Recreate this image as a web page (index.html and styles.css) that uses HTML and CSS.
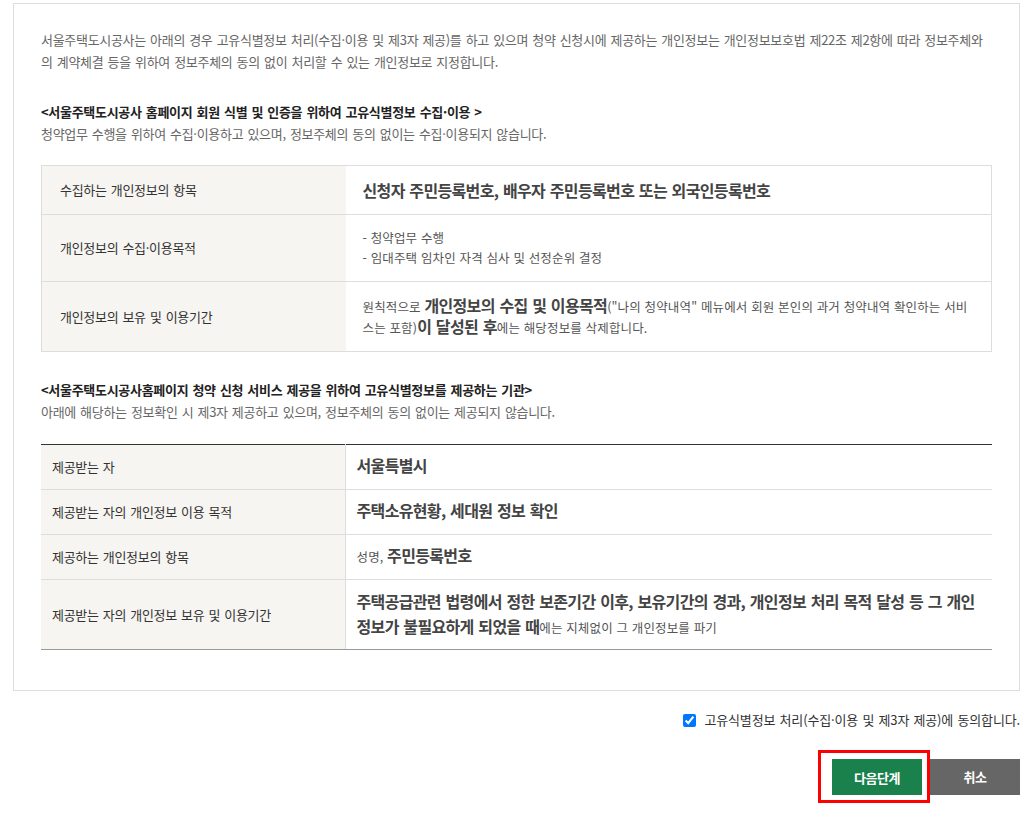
FILE: index.html
```html
<!DOCTYPE html>
<html lang="ko">
<head>
  <meta charset="UTF-8" />
  <meta name="viewport" content="width=device-width, initial-scale=1.0"/>
  <title>고유식별정보 처리 동의</title>
  <link rel="stylesheet" href="styles.css">
</head>
<body>
  <div class="wrap">
    <div class="agree-box">
      <p class="intro">서울주택도시공사는 아래의 경우 고유식별정보 처리(수집·이용 및 제3자 제공)를 하고 있으며 청약 신청시에 제공하는 개인정보는 개인정보보호법 제22조 제2항에 따라 정보주체와의 계약체결 등을 위하여 정보주체의 동의 없이 처리할 수 있는 개인정보로 지정합니다.</p>

      <h4 class="sec-title">&lt;서울주택도시공사 홈페이지 회원 식별 및 인증을 위하여 고유식별정보 수집·이용 &gt;</h4>
      <p class="sec-desc">청약업무 수행을 위하여 수집·이용하고 있으며, 정보주체의 동의 없이는 수집·이용되지 않습니다.</p>

      <table class="tbl tbl-box">
        <colgroup><col class="col-th"><col></colgroup>
        <tr>
          <th>수집하는 개인정보의 항목</th>
          <td class="val-lg">신청자 주민등록번호, 배우자 주민등록번호 또는 외국인등록번호</td>
        </tr>
        <tr>
          <th>개인정보의 수집·이용목적</th>
          <td class="val-list">- 청약업무 수행<br>- 임대주택 임차인 자격 심사 및 선정순위 결정</td>
        </tr>
        <tr>
          <th>개인정보의 보유 및 이용기간</th>
          <td class="val-mix">원칙적으로 <strong>개인정보의 수집 및 이용목적</strong>("나의 청약내역" 메뉴에서 회원 본인의 과거 청약내역 확인하는 서비스는 포함)<strong>이 달성된 후</strong>에는 해당정보를 삭제합니다.</td>
        </tr>
      </table>

      <h4 class="sec-title">&lt;서울주택도시공사홈페이지 청약 신청 서비스 제공을 위하여 고유식별정보를 제공하는 기관&gt;</h4>
      <p class="sec-desc">아래에 해당하는 정보확인 시 제3자 제공하고 있으며, 정보주체의 동의 없이는 제공되지 않습니다.</p>

      <table class="tbl tbl-line">
        <colgroup><col class="col-th"><col></colgroup>
        <tr>
          <th>제공받는 자</th>
          <td><strong>서울특별시</strong></td>
        </tr>
        <tr>
          <th>제공받는 자의 개인정보 이용 목적</th>
          <td><strong>주택소유현황, 세대원 정보 확인</strong></td>
        </tr>
        <tr>
          <th>제공하는 개인정보의 항목</th>
          <td>성명, <strong>주민등록번호</strong></td>
        </tr>
        <tr class="last">
          <th>제공받는 자의 개인정보 보유 및 이용기간</th>
          <td class="val-tall"><strong>주택공급관련 법령에서 정한 보존기간 이후, 보유기간의 경과, 개인정보 처리 목적 달성 등 그 개인정보가 불필요하게 되었을 때</strong>에는 지체없이 그 개인정보를 파기</td>
        </tr>
      </table>
    </div>

    <label class="agree-check">
      <input type="checkbox" checked>
      고유식별정보 처리(수집·이용 및 제3자 제공)에 동의합니다.
    </label>

    <div class="btn-area">
      <span class="focus-mark"><button type="button" class="btn btn-green">다음단계</button></span>
      <button type="button" class="btn btn-gray">취소</button>
    </div>
  </div>
</body>
</html>
```

FILE: styles.css
```css
body {
  margin: 0;
  font-family: "Noto Sans CJK KR", "Noto Sans", sans-serif;
  font-size: 13px;
  letter-spacing: -0.3px;
  word-spacing: 0.8px;
  color: #333;
  background: #fff;
}
.wrap {
  padding: 3px 15px 0 13px;
}
.agree-box {
  border: 1px solid #ddd;
  padding: 25px 27px 40px;
}
.intro {
  margin: 0;
  line-height: 22px;
  color: #666;
}
.sec-title {
  margin: 28px 0 0;
  font-size: 13px;
  font-weight: 700;
  line-height: 22px;
  color: #222;
}
.sec-desc {
  margin: 0;
  line-height: 22px;
  color: #666;
}

.tbl {
  width: 100%;
  border-collapse: collapse;
  table-layout: fixed;
  margin-top: 20px;
}
.tbl + .sec-title {
  margin-top: 27px;
}
.col-th {
  width: 304px;
}
.tbl th {
  text-align: left;
  font-weight: 400;
  background: #f6f5f1;
  color: #333;
  line-height: 22px;
  vertical-align: middle;
}
.tbl td {
  color: #555;
  font-size: 12.5px;
  letter-spacing: 0.15px;
  word-spacing: 0;
}
.tbl strong {
  font-size: 16px;
  font-weight: 700;
  line-height: 1;
  color: #444;
  letter-spacing: -0.65px;
  word-spacing: 0.8px;
}

/* table 1 */
.tbl-box {
  border: 1px solid #ddd;
}
.tbl-box th,
.tbl-box td {
  border-top: 1px solid #ddd;
}
.tbl-box th {
  padding: 13px 18px;
}
.tbl-box td {
  padding: 13px 17px;
}
.tbl-box .val-lg {
  font-size: 16px;
  font-weight: 700;
  color: #444;
  line-height: 22px;
  letter-spacing: -0.65px;
  word-spacing: 0.8px;
}
.tbl-box .val-list {
  line-height: 20px;
}
.tbl-box .val-mix {
  padding-top: 14px;
  line-height: 21px;
}

/* table 2 */
.tbl-line {
  border-top: 1px solid #333;
  margin-top: 21px;
}
.tbl-line th,
.tbl-line td {
  border-bottom: 1px solid #ddd;
  padding: 11px;
  line-height: 22px;
}
.tbl-line td {
  border-left: 1px solid #ddd;
}
.tbl-line tr.last th,
.tbl-line tr.last td {
  border-bottom: 1px solid #999;
}
.tbl-line .val-tall {
  padding: 10px 11px 9px;
  line-height: 25px;
}

.agree-check {
  display: flex;
  justify-content: flex-end;
  align-items: center;
  margin-top: 20px;
  line-height: 18px;
  letter-spacing: -0.15px;
  color: #333;
}
.agree-check input {
  width: 13px;
  height: 13px;
  margin: 0 8px 0 0;
}

.btn-area {
  display: flex;
  justify-content: flex-end;
  align-items: center;
  margin-top: 21px;
}
.focus-mark {
  display: block;
  border: 3px solid #f00;
  padding: 6px 5px 5px 11px;
}
.btn {
  display: block;
  width: 90px;
  height: 36px;
  border: 0;
  padding: 0;
  font-family: inherit;
  font-size: 13px;
  font-weight: 700;
  letter-spacing: -0.5px;
  color: #fff;
  cursor: pointer;
}
.btn-green {
  background: #1a804c;
}
.btn-gray {
  background: #666;
}
```
